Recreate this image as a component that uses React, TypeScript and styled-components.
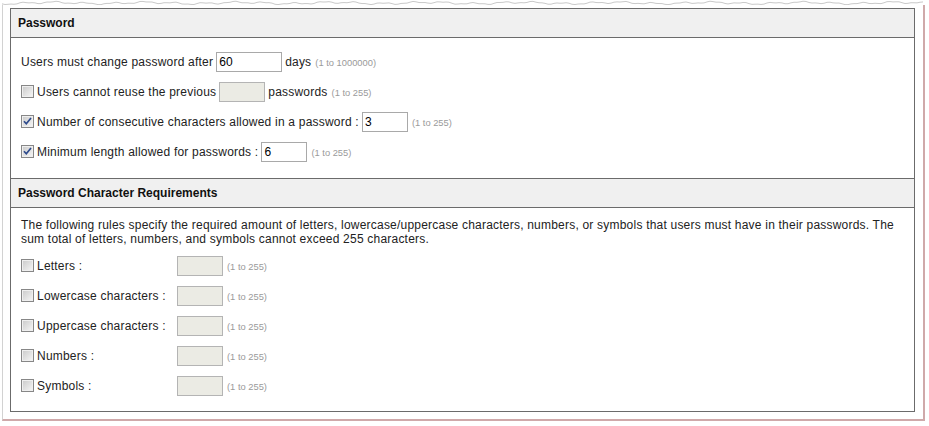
import React from "react";
import styled, { createGlobalStyle } from "styled-components";

const GlobalStyle = createGlobalStyle`
  html, body { margin: 0; padding: 0; background: #ffffff; }
  body {
    font-family: "Liberation Sans", Arial, sans-serif;
    font-size: 12px;
    color: #222222;
  }
  * { box-sizing: border-box; }
`;

const Page = styled.div`
  padding-left: 2px;
  width: 929px;
`;

const Torn = styled.svg`
  display: block;
  width: 923px;
  height: 5px;
`;

const Paper = styled.div`
  width: 923px;
  border-left: 1px solid #d2d2d2;
  border-right: 2px solid #cfa9aa;
  border-bottom: 2px solid #cfa9aa;
  padding: 3px 8px 7px 7px;
`;

const Panel = styled.div`
  border: 1px solid #6b6b6b;
  background: #ffffff;
`;

const Header = styled.div<{ $top?: boolean }>`
  height: ${(p) => (p.$top ? 30 : 29)}px;
  background: #f0f0f0;
  border-bottom: 1px solid #6b6b6b;
  border-top: ${(p) => (p.$top ? "1px solid #6b6b6b" : "none")};
  padding-left: 7px;
  display: flex;
  align-items: center;
  font-weight: bold;
  color: #111111;
`;

const Body = styled.div<{ $pt: number; $pb: number }>`
  padding: ${(p) => p.$pt}px 10px ${(p) => p.$pb}px 10px;
  display: flex;
  flex-direction: column;
  gap: 10px;
  letter-spacing: 0.21px;
`;

const Paragraph = styled.p`
  margin: 0;
  line-height: 14px;
`;

const Row = styled.div`
  height: 20px;
  display: flex;
  align-items: center;
  gap: 3px;
  white-space: nowrap;
`;

const LabelCell = styled.label<{ $width?: number }>`
  display: flex;
  align-items: center;
  gap: 3px;
  ${(p) => (p.$width ? `width: ${p.$width}px;` : "")}
  flex-shrink: 0;
`;

const Box = styled.span`
  position: relative;
  display: inline-block;
  width: 13px;
  height: 13px;
  border: 1px solid #878787;
  background: linear-gradient(135deg, #c9c9c9 0%, #e2e2e2 55%, #f7f7f7 100%);
  box-shadow: inset 0 0 0 1px #efefef;
  flex-shrink: 0;
  margin-top: -1px;
`;

const CheckSvg = styled.svg`
  position: absolute;
  left: 1px;
  top: 1px;
  width: 9px;
  height: 9px;
`;

const TextInput = styled.input<{ $w: number }>`
  width: ${(p) => p.$w}px;
  height: 20px;
  margin: 0;
  border: 1px solid #a9a9a9;
  padding: 0 2px;
  font-family: "Liberation Sans", Arial, sans-serif;
  font-size: 12px;
  letter-spacing: 0.2px;
  color: #000000;
  background: #ffffff;
  outline: none;
  flex-shrink: 0;
  &:disabled {
    background: #ebebe4;
    border-color: #b4b4b4;
  }
`;

const Hint = styled.span`
  font-size: 9.33px;
  letter-spacing: 0;
  color: #9a9a9a;
  padding-top: 2px;
  margin-left: 1px;
`;

const Checkbox: React.FC<{ checked?: boolean }> = ({ checked }) => (
  <Box>
    {checked && (
      <CheckSvg viewBox="0 0 9 9">
        <path d="M1 4.2 L3.3 6.8 L8 1" fill="none" stroke="#2d4a8c" strokeWidth="1.7" />
      </CheckSvg>
    )}
  </Box>
);

const tornPath = (() => {
  const pts: string[] = [];
  for (let x = 0; x <= 923; x += 3) {
    const y =
      3 +
      Math.sin(x * 0.21) * 0.8 +
      Math.sin(x * 0.067 + 1.3) * 0.7 +
      Math.sin(x * 0.53 + 0.4) * 0.4;
    pts.push(`L${x} ${Math.max(1, Math.min(4.6, y)).toFixed(2)}`);
  }
  return "M0 4.5 " + pts.join(" ");
})();

const reqs = ["Letters :", "Lowercase characters :", "Uppercase characters :", "Numbers :", "Symbols :"];

export default function App() {
  return (
    <>
      <GlobalStyle />
      <Page>
        <Torn viewBox="0 0 923 5">
          <path d={tornPath} fill="none" stroke="#c9c9c9" strokeWidth="1" />
        </Torn>
        <Paper>
          <Panel>
            <Header>Password</Header>
            <Body $pt={14} $pb={16}>
              <Row>
                <span>Users must change password after</span>
                <TextInput $w={66} defaultValue="60" />
                <span>days</span>
                <Hint>(1 to 1000000)</Hint>
              </Row>
              <Row>
                <LabelCell>
                  <Checkbox />
                  <span>Users cannot reuse the previous</span>
                </LabelCell>
                <TextInput $w={46} disabled />
                <span>passwords</span>
                <Hint>(1 to 255)</Hint>
              </Row>
              <Row>
                <LabelCell>
                  <Checkbox checked />
                  <span>Number of consecutive characters allowed in a password :</span>
                </LabelCell>
                <TextInput $w={46} defaultValue="3" />
                <Hint>(1 to 255)</Hint>
              </Row>
              <Row>
                <LabelCell>
                  <Checkbox checked />
                  <span>Minimum length allowed for passwords :</span>
                </LabelCell>
                <TextInput $w={46} defaultValue="6" />
                <Hint>(1 to 255)</Hint>
              </Row>
            </Body>
            <Header $top>Password Character Requirements</Header>
            <Body $pt={10} $pb={15}>
              <Paragraph>
                The following rules specify the required amount of letters, lowercase/uppercase characters,
                numbers, or symbols that users must have in their passwords. The sum total of letters, numbers,
                and symbols cannot exceed 255 characters.
              </Paragraph>
              {reqs.map((r) => (
                <Row key={r}>
                  <LabelCell $width={153}>
                    <Checkbox />
                    <span>{r}</span>
                  </LabelCell>
                  <TextInput $w={46} disabled />
                  <Hint>(1 to 255)</Hint>
                </Row>
              ))}
            </Body>
          </Panel>
        </Paper>
      </Page>
    </>
  );
}
